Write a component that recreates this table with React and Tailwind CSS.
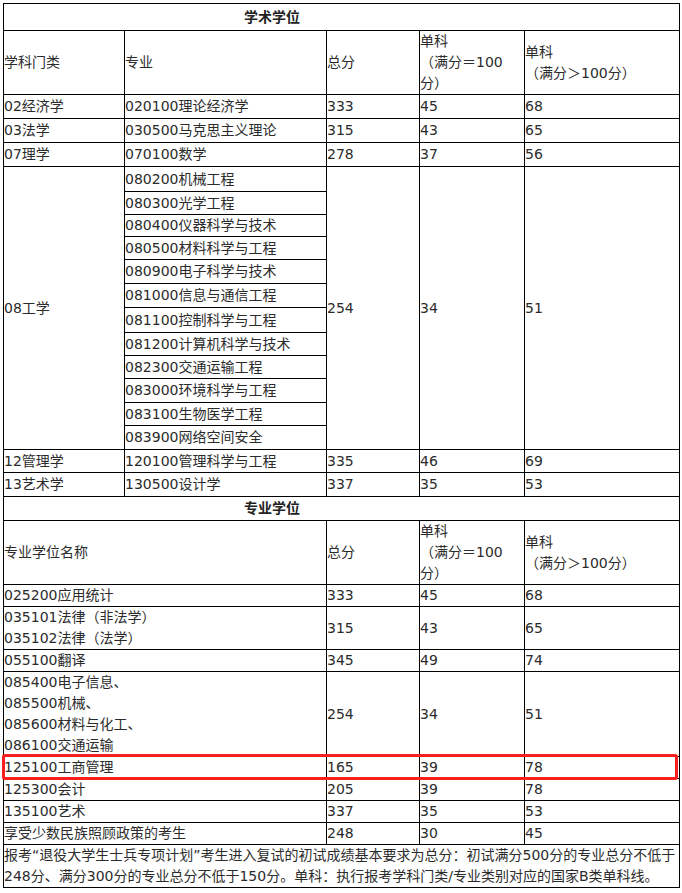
import React from 'react'

const FONT = { fontFamily: '"DejaVu Sans", "Noto Sans CJK SC", sans-serif' }

const ENG = [
  ['080200机械工程', 25],
  ['080300光学工程', 23],
  ['080400仪器科学与技术', 22],
  ['080500材料科学与工程', 23],
  ['080900电子科学与技术', 24],
  ['081000信息与通信工程', 24],
  ['081100控制科学与工程', 25],
  ['081200计算机科学与技术', 23],
  ['082300交通运输工程', 23],
  ['083000环境科学与工程', 24],
  ['083100生物医学工程', 23],
  ['083900网络空间安全', 24],
]

const PRO = [
  { name: ['025200应用统计'], h: 22, v: ['333', '45', '68'] },
  { name: ['035101法律（非法学）', '035102法律（法学）'], h: 43, v: ['315', '43', '65'] },
  { name: ['055100翻译'], h: 22, v: ['345', '49', '74'] },
  {
    name: ['085400电子信息、', '085500机械、', '085600材料与化工、', '086100交通运输'],
    h: 85,
    v: ['254', '34', '51'],
  },
  { name: ['125100工商管理'], h: 22, v: ['165', '39', '78'] },
  { name: ['125300会计'], h: 22, v: ['205', '39', '78'] },
  { name: ['135100艺术'], h: 22, v: ['337', '35', '53'] },
  { name: ['享受少数民族照顾政策的考生'], h: 22, v: ['248', '30', '45'] },
]

const td = 'border border-black p-0 align-middle text-left'

function Cell({ children, className = '', ...rest }) {
  return (
    <td className={`${td} ${className}`} {...rest}>
      {children}
    </td>
  )
}

function HeaderScores() {
  return (
    <>
      <Cell>总分</Cell>
      <Cell>
        单科
        <br />
        （满分＝100
        <br />
        分）
      </Cell>
      <Cell>
        单科
        <br />
        （满分＞100分）
      </Cell>
    </>
  )
}

export default function App() {
  return (
    <div className="bg-white min-h-screen pl-[3px] pt-[3px]" style={FONT}>
      <div className="relative w-[676px]">
        <table className="w-[676px] table-fixed border-collapse border border-black text-[14px] leading-[21px] text-[#2b2b2b]">
          <colgroup>
            <col className="w-[121px]" />
            <col className="w-[202px]" />
            <col className="w-[93px]" />
            <col className="w-[105px]" />
            <col className="w-[155px]" />
          </colgroup>
          <tbody>
            <tr className="h-[27px]">
              <Cell colSpan={5} className="pl-[240px] font-bold text-[#222]">
                学术学位
              </Cell>
            </tr>
            <tr className="h-[64px]">
              <Cell>学科门类</Cell>
              <Cell>专业</Cell>
              <HeaderScores />
            </tr>
            {[
              ['02经济学', '020100理论经济学', '333', '45', '68'],
              ['03法学', '030500马克思主义理论', '315', '43', '65'],
              ['07理学', '070100数学', '278', '37', '56'],
            ].map((r) => (
              <tr key={r[0]} className="h-[24px]">
                {r.map((c, i) => (
                  <Cell key={i}>{c}</Cell>
                ))}
              </tr>
            ))}
            {ENG.map(([name, h], i) => (
              <tr key={name} style={{ height: h }}>
                {i === 0 && <Cell rowSpan={12}>08工学</Cell>}
                <Cell>{name}</Cell>
                {i === 0 && (
                  <>
                    <Cell rowSpan={12}>254</Cell>
                    <Cell rowSpan={12}>34</Cell>
                    <Cell rowSpan={12}>51</Cell>
                  </>
                )}
              </tr>
            ))}
            <tr className="h-[23px]">
              <Cell>12管理学</Cell>
              <Cell>120100管理科学与工程</Cell>
              <Cell>335</Cell>
              <Cell>46</Cell>
              <Cell>69</Cell>
            </tr>
            <tr className="h-[24px]">
              <Cell>13艺术学</Cell>
              <Cell>130500设计学</Cell>
              <Cell>337</Cell>
              <Cell>35</Cell>
              <Cell>53</Cell>
            </tr>
            <tr className="h-[24px]">
              <Cell colSpan={5} className="pl-[240px] font-bold text-[#222]">
                专业学位
              </Cell>
            </tr>
            <tr className="h-[64px]">
              <Cell colSpan={2}>专业学位名称</Cell>
              <HeaderScores />
            </tr>
            {PRO.map((r) => (
              <tr key={r.name[0]} style={{ height: r.h }}>
                <Cell colSpan={2}>
                  {r.name.map((n, i) => (
                    <div key={i}>{n}</div>
                  ))}
                </Cell>
                {r.v.map((c, i) => (
                  <Cell key={i}>{c}</Cell>
                ))}
              </tr>
            ))}
            <tr className="h-[43px]">
              <Cell colSpan={5}>
                报考“退役大学生士兵专项计划”考生进入复试的初试成绩基本要求为总分：初试满分500分的专业总分不低于
                <br />
                248分、满分300分的专业总分不低于150分。单科：执行报考学科门类/专业类别对应的国家B类单科线。
              </Cell>
            </tr>
          </tbody>
        </table>
        <div className="absolute left-[-1px] top-[751px] w-[676px] h-[26px] border-[3px] border-[#fb1f1f] rounded-[3px] pointer-events-none" />
      </div>
    </div>
  )
}
